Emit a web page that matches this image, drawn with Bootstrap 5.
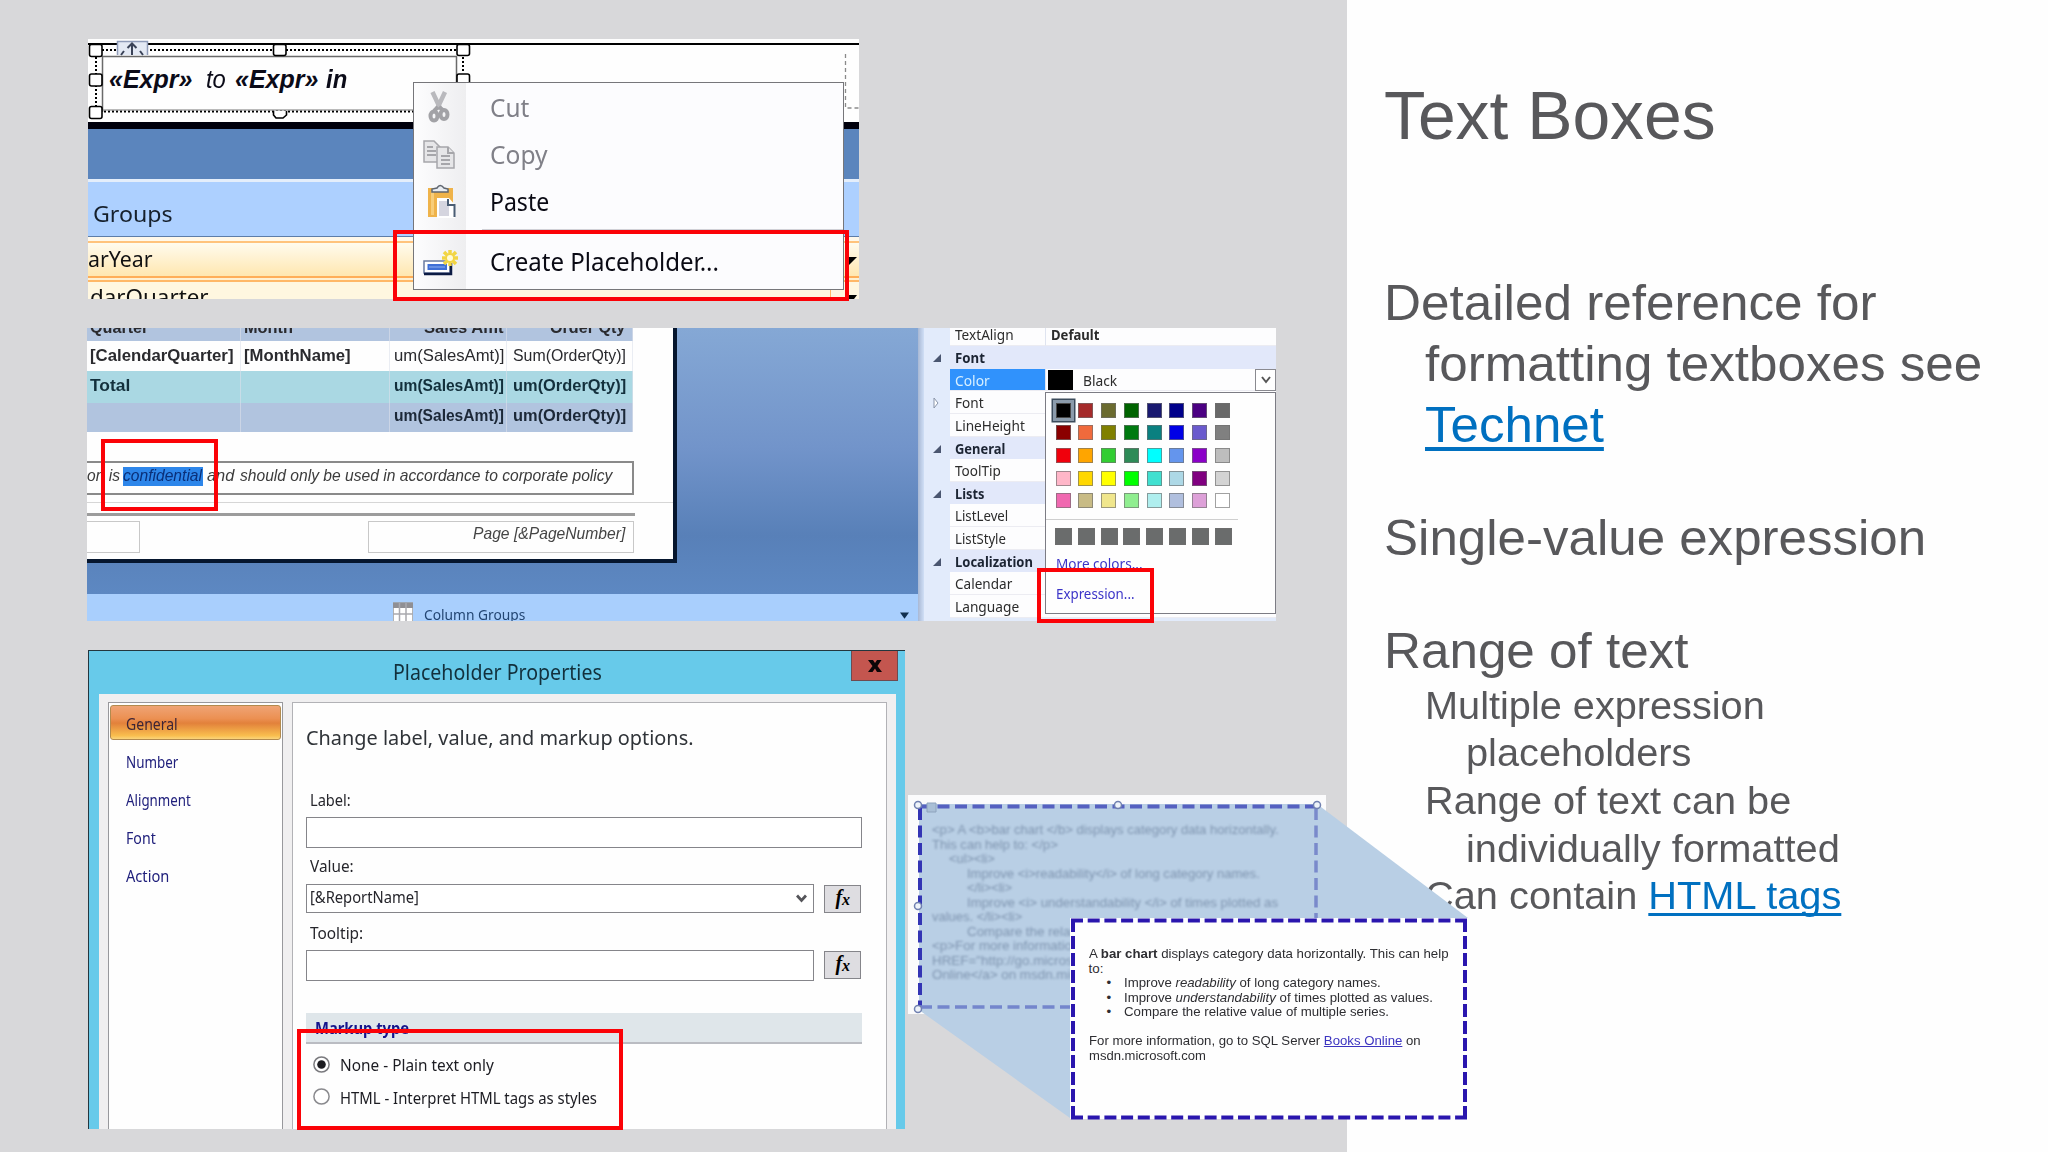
<!DOCTYPE html>
<html lang="en">
<head>
<meta charset="utf-8">
<meta name="viewport" content="width=device-width, initial-scale=1">
<title>Text Boxes</title>
<link rel="stylesheet" href="https://cdn.jsdelivr.net/npm/bootstrap@5.3.0/dist/css/bootstrap.min.css">
<style>
  body{margin:0;font-family:"Liberation Sans",Arial,sans-serif;color:#58585b}
  .slide{width:2048px;height:1152px;overflow:hidden;background:#fefefe}
  .gallery{width:1346.5px;background:#d8d8da}
  .notes{padding:74.5px 0 0 37.5px;white-space:nowrap}
  .fit{display:inline-block;white-space:nowrap;transform-origin:0 50%}
  .ui{font-family:"Noto Sans","Open Sans",sans-serif}
  .shot{position:absolute;overflow:hidden;background:#fefefe}
  .redbox{position:absolute;border:4px solid #fb0207}
  .over{position:absolute;left:0;top:0}

  /* slide text */
  .notes h1{font-size:68px;line-height:80px;font-weight:400;margin:0 0 117px}
  .lv1{font-size:50.5px;line-height:61.3px;margin-bottom:51.8px}
  .lv2{font-size:39.6px;line-height:47.7px;padding-left:41px}
  .in1{padding-left:41px}
  .notes a{color:#0070c0;text-decoration-thickness:4px;text-underline-offset:5px;text-decoration-skip-ink:none}
  .lv2 a{text-decoration-thickness:3px!important;text-underline-offset:4px!important}

  /* designer with context menu */
  .s1{left:88px;top:39px;width:771px;height:260px;color:#111}
  .s1-top{height:83px;padding:26.5px 0 0 21px}
  .expr{font-size:25px;line-height:26px;font-style:italic;color:#0b0b18}
  .bk{height:6.5px;background:#00000c}
  .b1{height:50.5px;background:#5b85bd}
  .b2{height:3px;background:#e4eefb}
  .b3{height:54px;background:#add0ff;padding:8px 0 0 5px;font-size:22px;line-height:46px;color:#16202c}
  .b4{height:5px;border-top:1.5px solid #5d7da8;background:#fff8ea}
  .b5{height:37px;border-top:2px solid #ffc37c;border-bottom:2px solid #ffae58;background:linear-gradient(#fffbee,#ffe7b0);font-size:22px;line-height:31px}
  .b6{height:2px;background:#fff0d0}
  .b7{height:19px;border-top:2px solid #ffb867;background:#fff7e0;font-size:22px;line-height:28px;padding-left:2px;overflow:hidden}
  .ctx{position:absolute;left:413px;top:82px;width:430.5px;height:208px;border:1.5px solid #76767a;background:linear-gradient(90deg,#fdfdfe,#eeeef0) 0 0/52px 100% no-repeat,#fcfcfe;font-size:25px}
  .ctx-i{height:47px;color:#0a0a14}
  .ctx-i .fit{margin-top:2.5px}
  .ctx-i.off{color:#808088}
  .ctx-ic{width:52px;margin-right:24px;flex:none}
  .ctx-sep{height:13px;padding:5px 0 0 68px}
  .ctx-sep div{border-top:1px solid #d0d0d6}

  /* report with property list */
  .s2{left:87px;top:328px;width:1189px;height:293px;color:#2a2a2e}
  .canvas{width:831px;flex:none}
  .desk{height:265.5px;background:linear-gradient(#85a8d5,#7294ca 45%,#5880b8 78%,#5d88c2)}
  .sheet{width:590px;height:235px;border-right:4px solid #06162e;border-bottom:4px solid #06162e;background:#fefefe;font-size:17px}
  .trow{display:grid;grid-template-columns:154px 149px 117px 126px;width:546px;overflow:hidden}
  .trow>div{border-right:1px solid rgba(220,225,235,.6);overflow:hidden;white-space:nowrap;padding-left:3px}
  .trow>div:nth-child(n+3){padding-left:4px}
  .trow>div:nth-child(4){padding-left:6px}
  .th0{height:13px;line-height:0;background:#b1c4df;font-weight:700}
  .th0 .fit{line-height:20px;margin-top:-13px}
  .tr1{height:30px;line-height:30px;font-weight:700}
  .tr2{height:32px;line-height:30px;background:#aad8e3;font-weight:700;color:#13303c}
  .tr3{height:29px;line-height:26px;background:#b1c4df;font-weight:700;color:#1c2838}
  .note{margin-top:29px;width:547px;height:34px;border:2px solid #8a8a8a;border-left:0;font-style:italic;line-height:26px;color:#3c3c3c}
  .hl{background:#2d86ea;color:#0a2f78;height:19px;line-height:18px;margin-top:4px;width:80px;flex:none}
  .ln1{margin-top:7px;height:1px;background:#d6d6d6}
  .ln2{margin-top:10px;height:3px;width:548px;background:#9c9c9c}
  .pgbox{height:32px;border:1.5px solid #c8c8c8}
  .colg{height:27.5px;background:#a9cffd;padding:7px 9px 0 306px;font-size:15px;line-height:27px;color:#234673;overflow:hidden}
  .split{width:6px;background:linear-gradient(90deg,#a8b8d4,#d0dff6);flex:none}
  .props{font-size:15px;background:#e2ebfb;color:#2c2c2c}
  .prow{height:22.65px;line-height:22.5px;padding-left:26px}
  .prow .cellx{background:#fdfdfe;flex:1;padding-left:5px;border-bottom:1px solid #ececf2;height:100%}
  .prow.hd .cellx{background:#e2e8fa;font-weight:700;color:#1c2433;border:0}
  .prow.first{height:18px;line-height:13px}
  .prow .val{width:231px;flex:none;border-left:1px solid #dfe4f0;background:#fdfdfe;height:100%;padding-left:5px;border-bottom:1px solid #ececf2}
  .prow.sel .cellx{background:#3092fc;color:#d8f0ff}
  .swb{width:25px;height:20px;background:#000;margin:1px 10px 0 -3px}
  .drop{width:21px;height:22px;border:1.5px solid #8a8a90;margin-left:auto;background:#fff}
  .pop{position:absolute;left:1045px;top:392px;width:230.5px;height:222px;border:1.5px solid #7c7c84;background:#fefefe;font-size:15px;color:#3b34c8}
  .pal{display:grid;grid-template-columns:repeat(8,15px);column-gap:7.8px;row-gap:7.7px;padding:9.5px 0 0 9.5px}
  .pal i{height:15px;border:1px solid rgba(110,110,110,.65)}
  .pal i.on{outline:3.5px solid #8b9bab;box-shadow:0 0 0 4.5px #3c4c5c}
  .pal.cust{grid-template-columns:repeat(8,17px);column-gap:5.8px;padding:8px 0 0 9px}
  .pal.cust i{height:17px;background:#6a6c6c}
  .popsep{margin-top:11px;width:192px;border-top:1.5px solid #cfcfcf}

  /* placeholder dialog */
  .s3{left:88px;top:650px;width:817px;height:478.5px;background:#67caea;border-top:1.5px solid #23363e;border-left:1.5px solid #23363e;color:#26262c}
  .tbar{height:42.5px;padding-left:303.5px;font-size:21px;line-height:41px;color:#12303c}
  .xbtn{width:47px;height:30px;background:#c4564f;border:1.5px solid #6f4a50;border-top:0;margin-left:auto;margin-right:7px}
  .dbody{margin:0 9px 0 9.5px;background:#f0eff0;height:440px;padding:8px 9px 0 9px;gap:8.5px}
  .nav-l{width:175.5px;flex:none;background:#fefefe;border:1.5px solid #98989c;padding:2px 1.5px;font-size:17px;color:#20207c}
  .nav-l div{height:37.9px;line-height:39px;padding-left:16px}
  .nav-l div.act{height:35px;margin-bottom:2.5px;line-height:36px;padding-left:14.5px;border:1.5px solid #b28a4e;border-radius:3px;background:linear-gradient(#efa475,#ec9052 38%,#e2813b 52%,#f9be4e 90%,#fbd57c);color:#3d2436}
  .dmain{flex:1;background:#fefefe;border:1.5px solid #b2b2b6;padding:0 24.5px 0 13px;font-size:15.7px}
  .dhead{font-size:20.5px;line-height:30px;margin-top:19.5px;color:#2f3338}
  .lab{padding-left:4.5px;line-height:20px}
  .inp{height:31px;border:1.5px solid #85858a;background:#fff}
  .fx{width:37px;height:28px;border:1.5px solid #85858a;background:#dedde1;margin-right:1px}
  .mk{height:31px;background:#dfe6ea;border-bottom:2px solid #babcc2;font-weight:700;color:#15158c;padding-left:9px;line-height:30px}
  .rad{height:32.3px;padding-left:7px;color:#1c1c22}
  .rad svg{margin-right:10px}

  /* markup callout */
  .s4{position:absolute;left:908px;top:795px;width:562px;height:326px}
  .src{position:absolute;left:24px;top:28px;width:400px;height:180px;font-size:13.4px;line-height:14.5px;color:#7f95b0;filter:blur(1px);overflow:hidden}
  .src div,.res div{height:14.5px;white-space:nowrap}
  .res{position:absolute;left:162px;top:123px;width:398px;height:201px;padding:29px 0 0 18.5px;background:#fefefe;font-size:13.4px;line-height:14.5px;color:#2e2e32}
  .res a{color:#3c34c0}
  .li2{padding-left:35px;position:relative}
  .li2::before{content:"•";position:absolute;left:18px}
</style>
<script src="https://cdn.jsdelivr.net/npm/bootstrap@5.3.0/dist/js/bootstrap.bundle.min.js"></script>
</head>
<body>
<main class="slide d-flex position-relative">
  <section class="gallery flex-shrink-0">

    <figure class="shot s1 m-0">
      <div class="s1-top">
        <div class="expr d-flex"><b style="width:97px"><span class="fit" data-w="83">«Expr»</span></b><span style="width:29px"><span class="fit" data-w="20">to</span></span><b style="width:91px"><span class="fit" data-w="83">«Expr»</span></b><b><span class="fit" data-w="21">in</span></b></div>
      </div>
      <div class="bk"></div><div class="b1"></div><div class="b2"></div>
      <div class="b3 ui"><span class="fit" data-w="80">Groups</span></div>
      <div class="b4"></div>
      <div class="b5 ui"><span class="fit" data-w="65">arYear</span></div>
      <div class="b6"></div>
      <div class="b7 ui"><span class="fit" data-w="119">darQuarter</span></div>
      <svg class="over" width="771" height="260" viewBox="88 39 771 260" fill="none" stroke="#000">
        <path d="M88 44H859" stroke-width="2"/>
        <path d="M102 50H457M104 111.5H413M96 57V107M463 57V73" stroke-width="2" stroke-dasharray="2 2"/>
        <path d="M102.5 112V56.5H456.500V90" stroke="#6a6a6a" stroke-width="1.5"/>
        <path d="M102 110H413" stroke="#777"/>
        <path d="M845.500 54V108H859" stroke="#8a8a8a" stroke-width="1.3" stroke-dasharray="4 3"/>
        <path d="M117.500 55V41.500H147.500V55" fill="#e3e9f4" stroke="#8e9bb8" stroke-width="1.5"/>
        <path d="M132 55V44M127.500 48L132 43.500L136.500 48M121 55L124 51M143 55L140 51" stroke="#3a4358" stroke-width="2"/>
        <g fill="#fff" stroke-width="1.600"><rect x="89.500" y="44.500" width="12.500" height="12" rx="2"/><rect x="273.500" y="44.500" width="12.500" height="11" rx="2"/><rect x="457" y="44.500" width="12.500" height="11" rx="2"/><rect x="89.500" y="74" width="12.500" height="12" rx="2"/><rect x="457" y="74" width="12.500" height="14" rx="2"/><rect x="89.500" y="106.500" width="12.500" height="12" rx="2"/><path d="M273.500 111V115L276 118H283L286.500 115V111"/></g>
        <path d="M830.500 290V299" stroke="#ffb867"/>
        <path d="M845 257H857L849 265H845ZM845 295H857L854 299H848Z" fill="#000" stroke="none"/>
      </svg>
    </figure>

    <div class="ctx ui">
      <div class="ctx-i off d-flex align-items-center"><svg class="ctx-ic" height="34" viewBox="0 0 52 34" fill="none" stroke="#a2a2a6" stroke-width="3"><path d="M18.500 2L26.500 19M31 2L23 19" stroke-width="4.500" stroke="#b9b9bd"/><path d="M24 17L20 21M25 17L29 20" stroke-width="4"/><ellipse cx="20" cy="26" rx="3.500" ry="4.500" stroke-width="4"/><ellipse cx="30" cy="24.500" rx="3.500" ry="4.500" stroke-width="4"/></svg><span class="fit" data-w="39">Cut</span></div>
      <div class="ctx-i off d-flex align-items-center"><svg class="ctx-ic" height="34" viewBox="0 0 52 34" fill="#e6e6e8" stroke="#a6a6aa" stroke-width="1.5"><path d="M10 4H20L26 10V25H10Z"/><path d="M13 10H19M13 14H22M13 18H22" stroke-width="2"/><path d="M23 10H34L40 16V31H23Z"/><path d="M34 10V16H40M27 19H36M27 23H36M27 27H36" stroke-width="2"/></svg><span class="fit" data-w="58">Copy</span></div>
      <div class="ctx-i d-flex align-items-center"><svg class="ctx-ic" height="36" viewBox="0 0 52 36"><path d="M14 5H39V34H14Z" fill="#efb34a"/><path d="M17 8H20V32H17Z" fill="#f8cd79"/><path d="M18 9V6L23 5Q26 0 30 5L34 6V9Z" fill="#e9edf2" stroke="#5f6670" stroke-width="1.500"/><path d="M23 15H35L41 22V35H23Z" fill="#fff"/><path d="M25 18H35V33H25Z" fill="#d5d5df"/><path d="M34 16V22H40.500V34" fill="none" stroke="#4a5d74" stroke-width="2"/></svg><span class="fit" data-w="59">Paste</span></div>
      <div class="ctx-sep"><div></div></div>
      <div class="ctx-i d-flex align-items-center"><svg class="ctx-ic" height="34" viewBox="0 0 52 34"><path d="M10 17H36V29H10Z" fill="#fff" stroke="#6a7ba0" stroke-width="1.500"/><path d="M10 30H37V19" fill="none" stroke="#0c1b44" stroke-width="2.500"/><path d="M13.500 20H33V26H13.500Z" fill="#3f6fd6"/><path d="M15 23H31" stroke="#8db0f2" stroke-width="1"/><g stroke="#f2d544" stroke-width="3.500"><path d="M36 6V22M28 14H44M30 8L42 20M42 8L30 20"/></g><circle cx="36" cy="14" r="3" fill="#fffbd8"/></svg><span class="fit" data-w="229">Create Placeholder...</span></div>
    </div>
    <div class="redbox" style="left:393px;top:229.5px;width:456px;height:71.5px"></div>

    <figure class="shot s2 m-0 d-flex">
      <div class="canvas">
        <div class="desk">
          <div class="sheet">
            <div class="trow th0"><div><span class="fit" data-w="58">Quarter</span></div><div><span class="fit" data-w="49">Month</span></div><div style="padding-left:34px"><span class="fit" data-w="80">Sales Amt</span></div><div style="padding-left:43px"><span class="fit" data-w="75">Order Qty</span></div></div>
            <div class="trow tr1"><div><span class="fit" data-w="143">[CalendarQuarter]</span></div><div><span class="fit" data-w="107">[MonthName]</span></div><div class="fw-normal"><span class="fit" data-w="110">um(SalesAmt)]</span></div><div class="fw-normal"><span class="fit" data-w="113">Sum(OrderQty)]</span></div></div>
            <div class="trow tr2"><div><span class="fit" data-w="40">Total</span></div><div></div><div><span class="fit" data-w="110">um(SalesAmt)]</span></div><div><span class="fit" data-w="113">um(OrderQty)]</span></div></div>
            <div class="trow tr3"><div></div><div></div><div><span class="fit" data-w="110">um(SalesAmt)]</span></div><div><span class="fit" data-w="113">um(OrderQty)]</span></div></div>
            <div class="note d-flex"><div class="flex-shrink-0" style="width:36px"><span class="fit" data-w="33">on is</span></div><div class="hl"><span class="fit" data-w="79">confidential</span></div><div class="ps-1 flex-shrink-0" style="width:37px"><span class="fit" data-w="27">and</span></div><div><span class="fit" data-w="372">should only be used in accordance to corporate policy</span></div></div>
            <div class="ln1"></div><div class="ln2"></div>
            <div class="d-flex" style="margin-top:5px"><div class="pgbox border-start-0" style="width:53px"></div><div class="pgbox" style="width:266px;margin-left:227.5px;padding-left:104px;font-style:italic;line-height:23px;color:#444"><span class="fit" data-w="152">Page [&amp;PageNumber]</span></div></div>
          </div>
        </div>
        <div class="colg ui d-flex align-items-start">
          <svg width="20" height="22" viewBox="0 0 20 22" style="margin:1px 11px 0 0"><path d="M0 1H20V20H0Z" fill="#fff" stroke="#999" stroke-width="1.500"/><path d="M0 1H20V6H0Z" fill="#8f8f94"/><path d="M6.500 1V20M13 1V20M0 12H20" stroke="#a9a9ae" stroke-width="1.500"/></svg>
          <span class="fit" data-w="101">Column Groups</span>
          <svg class="ms-auto" width="9" height="8" viewBox="0 0 10 8" style="margin-top:11px"><path d="M0 0H10L5 7Z" fill="#12304f"/></svg>
        </div>
      </div>
      <div class="split"></div>
      <div class="props ui flex-grow-1" id="props"></div>
    </figure>

    <div class="pop ui">
      <div class="pal" id="palette"></div>
      <div class="popsep"></div>
      <div class="pal cust" id="custom"></div>
      <div style="padding-left:9.500px;line-height:22px;margin-top:7px"><span class="fit" data-w="87">More colors...</span></div>
      <div style="padding-left:9.500px;line-height:22px;margin-top:7.500px"><span class="fit" data-w="79">Expression...</span></div>
    </div>
    <div class="redbox" style="left:101px;top:438.5px;width:117px;height:72px"></div>
    <div class="redbox" style="left:1037px;top:568px;width:117px;height:54.500px;background:linear-gradient(#fefefe,#fefefe) 8px 0/100% 4px no-repeat"></div>

    <figure class="shot s3 m-0 ui">
      <div class="tbar d-flex"><span class="fit" style="padding-top:1px" data-w="209">Placeholder Properties</span><div class="xbtn d-flex align-items-center justify-content-center"><svg width="14" height="12" viewBox="0 0 14 12"><path d="M0 0H5L7 3L9 0H13.500L9.500 6L14 12H9L7 8.500L4.500 12H0L4.500 6Z" fill="#0c0608"/></svg></div></div>
      <div class="dbody d-flex">
        <nav class="nav-l">
          <div class="act"><span class="fit" data-w="52">General</span></div>
          <div><span class="fit" data-w="52">Number</span></div>
          <div><span class="fit" data-w="65">Alignment</span></div>
          <div><span class="fit" data-w="30">Font</span></div>
          <div><span class="fit" data-w="43">Action</span></div>
        </nav>
        <div class="dmain">
          <div class="dhead"><span class="fit" data-w="388">Change label, value, and markup options.</span></div>
          <div class="lab" style="margin-top:38px"><span class="fit" data-w="41">Label:</span></div>
          <div class="inp" style="margin-top:7px"></div>
          <div class="lab" style="margin-top:8px"><span class="fit" data-w="44">Value:</span></div>
          <div class="d-flex justify-content-between" style="margin-top:7.500px"><div class="inp d-flex align-items-center justify-content-between" style="width:508px;height:29.500px;padding:0 6px 0 3.500px"><span class="fit" data-w="109">[&amp;ReportName]</span><svg width="11" height="9" viewBox="0 0 11 9"><path d="M1 1.500L5.500 6.500L10 1.500" fill="none" stroke="#55555a" stroke-width="2.800"/></svg></div><div class="fx" style="margin-top:1px"><svg class="d-block" width="34" height="25" viewBox="0 0 34 25"><text x="10.500" y="17.500" font-family="Liberation Serif,serif" font-style="italic" font-weight="700" font-size="20">f</text><text x="17" y="18.500" font-family="Liberation Serif,serif" font-style="italic" font-weight="700" font-size="16">x</text></svg></div></div>
          <div class="lab" style="margin-top:9.500px"><span class="fit" data-w="53">Tooltip:</span></div>
          <div class="d-flex justify-content-between" style="margin-top:7px"><div class="inp" style="width:508px"></div><div class="fx" style="margin-top:1px"><svg class="d-block" width="34" height="25" viewBox="0 0 34 25"><text x="10.500" y="17.500" font-family="Liberation Serif,serif" font-style="italic" font-weight="700" font-size="20">f</text><text x="17" y="18.500" font-family="Liberation Serif,serif" font-style="italic" font-weight="700" font-size="16">x</text></svg></div></div>
          <div class="mk" style="margin-top:32px"><span class="fit" data-w="94">Markup type</span></div>
          <div class="rad d-flex align-items-center" style="margin-top:4.500px"><svg width="17" height="17" viewBox="0 0 17 17"><circle cx="8.500" cy="8.500" r="7.600" fill="#fff" stroke="#7a7a7e" stroke-width="1.500"/><circle cx="8.500" cy="8.500" r="4.300" fill="#1c1c20"/></svg><span class="fit mt-1" data-w="154">None - Plain text only</span></div>
          <div class="rad d-flex align-items-center"><svg width="17" height="17" viewBox="0 0 17 17"><circle cx="8.500" cy="8.500" r="7.600" fill="#fff" stroke="#8a8a8e" stroke-width="1.500"/></svg><span class="fit mt-1" data-w="257">HTML - Interpret HTML tags as styles</span></div>
        </div>
      </div>
    </figure>
    <div class="redbox" style="left:296.500px;top:1029px;width:326.500px;height:101px"></div>
  </section>

  <section class="notes">
    <h1><span class="fit" data-w="332">Text Boxes</span></h1>
    <div class="lv1"><div><span class="fit" data-w="493">Detailed reference for</span></div><div class="in1"><span class="fit" data-w="557">formatting textboxes see</span></div><div class="in1"><a href="#" class="fit" data-w="179">Technet</a></div></div>
    <div class="lv1"><span class="fit" data-w="542">Single-value expression</span></div>
    <div class="lv1 mb-0"><span class="fit" data-w="304">Range of text</span></div>
    <div class="lv2">
      <div><span class="fit" data-w="340">Multiple expression</span></div>
      <div class="in1"><span class="fit" data-w="225">placeholders</span></div>
      <div><span class="fit" data-w="366">Range of text can be</span></div>
      <div class="in1"><span class="fit" data-w="374">individually formatted</span></div>
      <div><span class="fit" data-w="416">Can contain <a href="#">HTML tags</a></span></div>
    </div>
  </section>

  <figure class="s4 m-0">
    <svg class="over" width="562" height="326" viewBox="908 795 562 326" fill="none">
      <path d="M908 795H1326V1014H908Z" fill="#fbfbfc"/>
      <path d="M919 804H1317L1468 918V1118H1070L919 1010Z" fill="#b9cfe5"/>
      <path d="M920 806.500H1316" stroke="#5560c0" stroke-width="4" stroke-dasharray="12 5.500"/>
      <path d="M1316 808V920" stroke="#7a8acb" stroke-width="3.500" stroke-dasharray="12 5.500"/>
      <path d="M920 808V1008" stroke="#3334b4" stroke-width="4" stroke-dasharray="12 5.500"/>
      <path d="M920 1007H1072" stroke="#7486cc" stroke-width="3.500" stroke-dasharray="12 5.500"/>
      <path d="M927 803H936V812H927Z" fill="#a9bfd6" stroke="#8ea3bd"/>
      <g fill="#eef3f9" stroke="#7080b0" stroke-width="1.500"><circle cx="918" cy="805" r="3.500"/><circle cx="1118" cy="805" r="3.500"/><circle cx="1317" cy="805" r="3.500"/><circle cx="918" cy="906" r="3.500"/><circle cx="918" cy="1009" r="3.500"/></g>
    </svg>
    <div class="src">
      <div><span class="fit" data-w="347">&lt;p&gt; A &lt;b&gt;bar chart &lt;/b&gt; displays category data horizontally.</span></div>
      <div><span class="fit" data-w="126">This can help to: &lt;/p&gt;</span></div>
      <div style="padding-left:17px"><span class="fit" data-w="46">&lt;ul&gt;&lt;li&gt;</span></div>
      <div style="padding-left:35px"><span class="fit" data-w="293">Improve &lt;i&gt;readability&lt;/i&gt; of long category names.</span></div>
      <div style="padding-left:35px"><span class="fit" data-w="45">&lt;/li&gt;&lt;li&gt;</span></div>
      <div style="padding-left:35px"><span class="fit" data-w="311">Improve &lt;i&gt; understandability &lt;/i&gt; of times plotted as</span></div>
      <div><span class="fit" data-w="90">values. &lt;/li&gt;&lt;li&gt;</span></div>
      <div style="padding-left:35px">Compare the relative</div>
      <div>&lt;p&gt;For more information,</div>
      <div>HREF="http://go.microsoft</div>
      <div>Online&lt;/a&gt; on msdn.micro</div>
    </div>
    <div class="res">
      <div><span class="fit" data-w="360">A <b>bar chart</b> displays category data horizontally. This can help</span></div>
      <div>to:</div>
      <div class="li2"><span class="fit" data-w="257">Improve <i>readability</i> of long category names.</span></div>
      <div class="li2"><span class="fit" data-w="309">Improve <i>understandability</i> of times plotted as values.</span></div>
      <div class="li2"><span class="fit" data-w="265">Compare the relative value of multiple series.</span></div>
      <div></div>
      <div><span class="fit" data-w="332">For more information, go to SQL Server <a href="#">Books Online</a> on</span></div>
      <div><span class="fit" data-w="117">msdn.microsoft.com</span></div>
    </div>
    <svg class="over" width="562" height="326" viewBox="908 795 562 326" fill="none" stroke="#2a16ae" stroke-width="4">
      <path d="M1071 920.500H1467" stroke-dasharray="12 4.700"/><path d="M1071 1117.500H1467" stroke-dasharray="12 4.700"/>
      <path d="M1073 919V1119M1465 919V1119" stroke-dasharray="13 4"/>
    </svg>
  </figure>
</main>
<script>
  // Property grid rows: [label, label width, kind]
  const rows = [["TextAlign",59,"first"],["Font",30,"hd"],["Color",35,"sel"],["Font",29,"exp"],["LineHeight",70,""],["General",50,"hd"],["ToolTip",46,""],["Lists",29,"hd"],["ListLevel",53,""],["ListStyle",51,""],["Localization",78,"hd"],["Calendar",57,""],["Language",64,""]];
  const tri = k => k==="hd" ? '<path d="M9 1V9H1Z" fill="#4a5670"/>' : k==="exp" ? '<path d="M2 0L6 5L2 10Z" fill="#fff" stroke="#8893a8"/>' : '';
  document.getElementById("props").innerHTML = rows.map(([t,w,k]) => {
    let val = "";
    if (k==="first") val = '<div class="val"><b><span class="fit" data-w="48">Default</span></b></div>';
    if (k==="sel") val = '<div class="val d-flex"><div class="swb"></div><span class="fit" data-w="34">Black</span><div class="drop d-flex align-items-center justify-content-center"><svg width="10" height="8" viewBox="0 0 10 8"><path d="M1 1L5 6L9 1" fill="none" stroke="#555" stroke-width="2"/></svg></div></div>';
    const mark = tri(k) ? `<svg width="10" height="10" viewBox="0 0 10 10" style="margin:7px 8px 0 -18px;flex:none">${tri(k)}</svg>` : "";
    return `<div class="prow d-flex ${k}">${mark}<div class="cellx"><span class="fit" data-w="${w}">${t}</span></div>${val}</div>`;
  }).join("");

  const colors = ["#000","#a52a2a","#6b6b2f","#006400","#191970","#00008b","#4b0082","#696969","#8b0000","#f06a3c","#808000","#007a10","#0a8080","#0000e6","#6a5acd","#808080","#f0000c","#ffa500","#32cd32","#2e8b57","#00ffff","#6495ed","#8b00c8","#bdbdbd","#ffb6c8","#ffd700","#ffff00","#00ff00","#40e0d0","#add8e6","#800080","#d3d3d3","#f068b0","#c8bb85","#f0e68c","#90ee90","#afeeee","#b0bfde","#dda0d8","#fff"];
  document.getElementById("palette").innerHTML = colors.map((c,i) => `<i class="${i?"":"on"}" style="background:${c}"></i>`).join("");
  document.getElementById("custom").innerHTML = "<i></i>".repeat(8);

  document.querySelectorAll(".fit[data-w]").forEach(e => {
    e.style.transform = `scaleX(${e.dataset.w / e.offsetWidth})`;
  });
</script>
</body>
</html>
